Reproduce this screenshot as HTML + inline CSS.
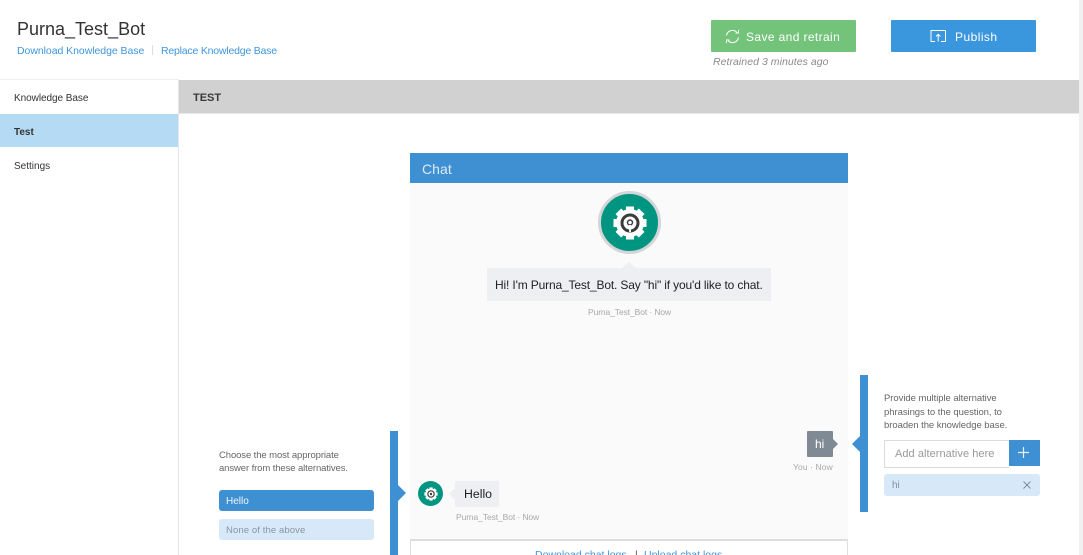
<!DOCTYPE html>
<html><head><meta charset="utf-8"><style>
html,body{margin:0;padding:0;background:#fff;width:1083px;height:555px;overflow:hidden}
body{position:relative;font-family:"Liberation Sans",sans-serif;color:#333}
#root{position:absolute;left:0;top:0;width:1083px;height:555px;overflow:hidden}
.a{position:absolute;white-space:nowrap}
svg{display:block}
</style></head><body><div id="root">

<div class="a" style="left:1079px;top:0;width:4px;height:555px;background:#f1f1f1"></div>
<div class="a" style="left:17px;top:18px;font-size:18px;line-height:22px;color:#333">Purna_Test_Bot</div>
<div class="a" style="left:17px;top:44px;font-size:10.5px;line-height:14px;color:#3f96dc;letter-spacing:-.05px">Download Knowledge Base</div>
<div class="a" style="left:152px;top:45px;width:1px;height:10px;background:#ddd"></div>
<div class="a" style="left:161px;top:44px;font-size:10.5px;line-height:14px;color:#3f96dc;letter-spacing:-.2px">Replace Knowledge Base</div>

<div class="a" style="left:711px;top:20px;width:145px;height:32px;background:#74c37b;border-radius:1px"></div>
<svg class="a" style="left:725px;top:29px" width="15" height="15" viewBox="0 0 15 15" fill="none" stroke="#fff" stroke-width="1"><path d="M1.5 6.5A6 6 0 0 1 12 3.5M13.5 1v3h-3M13.5 8.500A6 6 0 0 1 3 11.500M1.500 14v-3h3"/></svg>
<div class="a" style="left:746px;top:30px;font-size:12px;line-height:15px;color:#fff;letter-spacing:.38px">Save and retrain</div>
<div class="a" style="left:713px;top:55px;font-size:10.5px;line-height:14px;color:#8a8a8a;font-style:italic;letter-spacing:.05px">Retrained 3 minutes ago</div>
<div class="a" style="left:891px;top:20px;width:145px;height:32px;background:#3a96dd;border-radius:1px"></div>
<svg class="a" style="left:930px;top:29px" width="17" height="14" viewBox="0 0 17 14" fill="none" stroke="#fff" stroke-width="1"><path d="M5 12.500H1V1.500H15.500V12.500H11M8.200 12.500V5.500M6 7.500l2.200-2.200 2.200 2.200"/></svg>
<div class="a" style="left:955px;top:30px;font-size:12px;line-height:15px;color:#fff;letter-spacing:.45px">Publish</div>

<div class="a" style="left:0;top:79px;width:179px;height:1px;background:#eee"></div>
<div class="a" style="left:178px;top:80px;width:1px;height:475px;background:#e3e6e8"></div>
<div class="a" style="left:179px;top:80px;width:900px;height:33px;background:#d1d1d1"></div>
<div class="a" style="left:179px;top:113px;width:900px;height:1px;background:#e8e8e8"></div>
<div class="a" style="left:193px;top:91px;font-size:11px;line-height:15px;font-weight:bold;color:#3a3a3a">TEST</div>
<div class="a" style="left:14px;top:91px;font-size:10px;line-height:15px;letter-spacing:-.05px">Knowledge Base</div>
<div class="a" style="left:0;top:114px;width:178px;height:33px;background:#b4dbf3"></div>
<div class="a" style="left:14px;top:125px;font-size:10px;line-height:15px;font-weight:bold">Test</div>
<div class="a" style="left:14px;top:159px;font-size:10px;line-height:15px">Settings</div>

<div class="a" style="left:410px;top:183px;width:438px;height:372px;background:#fafafa"></div>
<div class="a" style="left:410px;top:153px;width:438px;height:30px;background:#3e90d2"></div>
<div class="a" style="left:422px;top:160px;font-size:14px;line-height:18px;color:#dcebf7;letter-spacing:.05px">Chat</div>

<div class="a" style="left:598px;top:191px;width:57px;height:57px;border:3px solid #d3d5d8;border-radius:50%;background:#009580"></div>
<svg class="a" style="left:609.5px;top:202.5px" width="40" height="40" viewBox="-20 -20 40 40"><circle r="14" fill="#fff"/><g fill="#fff"><rect x="-4" y="-16.5" width="8" height="33"/><rect x="-4" y="-16.5" width="8" height="33" transform="rotate(45)"/><rect x="-4" y="-16.5" width="8" height="33" transform="rotate(90)"/><rect x="-4" y="-16.5" width="8" height="33" transform="rotate(135)"/></g><circle r="8" fill="none" stroke="#3c3c3c" stroke-width="3"/><circle r="4.5" fill="#fff"/><circle cy="-.5" r="2.500" fill="none" stroke="#3c3c3c" stroke-width="1.500"/><path d="M0 2v7" stroke="#fff" stroke-width="1.800"/></svg>
<div class="a" style="left:487px;top:268px;width:284px;height:33px;background:#edeff2"></div>
<div class="a" style="left:622px;top:262px;width:0;height:0;border:7px solid transparent;border-top:0;border-bottom:6px solid #edeff2"></div>
<div class="a" style="left:495px;top:278px;font-size:12px;line-height:15px;color:#222;letter-spacing:-.15px">Hi! I'm Purna_Test_Bot. Say "hi" if you'd like to chat.</div>
<div class="a" style="left:588px;top:306px;font-size:8.5px;line-height:12px;color:#a8a8a8;letter-spacing:-.1px">Purna_Test_Bot · Now</div>

<div class="a" style="left:807px;top:431px;width:26px;height:26px;background:#808a94;border-radius:1px"></div>
<div class="a" style="left:833px;top:439px;width:0;height:0;border:5px solid transparent;border-right:0;border-left:5px solid #808a94"></div>
<div class="a" style="left:815px;top:436px;font-size:12px;line-height:16px;color:#fff">hi</div>
<div class="a" style="left:793px;top:461px;font-size:8.5px;line-height:12px;color:#a8a8a8;letter-spacing:.1px">You · Now</div>

<div class="a" style="left:860px;top:375px;width:8px;height:137px;background:#3e90d2"></div>
<div class="a" style="left:852px;top:436px;width:0;height:0;border:8px solid transparent;border-left:0;border-right:8px solid #3e90d2"></div>
<div class="a" style="left:884px;top:392px;font-size:9.5px;line-height:13.5px;color:#666;white-space:pre;letter-spacing:-.05px">Provide multiple alternative
phrasings to the question, to
broaden the knowledge base.</div>
<div class="a" style="left:884px;top:440px;width:124px;height:26px;border:1px solid #dcdcdc;border-width:1px 0 1px 1px;background:#fff"></div>
<div class="a" style="left:895px;top:447px;font-size:11px;line-height:15px;color:#999;letter-spacing:.05px">Add alternative here</div>
<div class="a" style="left:1009px;top:440px;width:31px;height:26px;background:#3e90d2"></div>
<svg class="a" style="left:1016px;top:445px" width="15" height="15" viewBox="0 0 15 15" stroke="#e4f0fa" stroke-width="1.2"><path d="M7.500 2v11M2 7.500h11"/></svg>
<div class="a" style="left:884px;top:474px;width:156px;height:22px;background:#d7e8f8;border-radius:3px"></div>
<div class="a" style="left:892px;top:479px;font-size:10px;line-height:14px;color:#85929e">hi</div>
<svg class="a" style="left:1022px;top:480px" width="10" height="10" viewBox="0 0 10 10" stroke="#7d8a96" stroke-width=".9"><path d="M1.500 1.500l7 7M8.500 1.500l-7 7"/></svg>

<div class="a" style="left:390px;top:431px;width:8px;height:124px;background:#3e90d2"></div>
<div class="a" style="left:398px;top:485px;width:0;height:0;border:8px solid transparent;border-right:0;border-left:8px solid #3e90d2"></div>
<div class="a" style="left:219px;top:448.5px;font-size:9.5px;line-height:13.5px;color:#666;white-space:pre;letter-spacing:-.1px">Choose the most appropriate
answer from these alternatives.</div>
<div class="a" style="left:219px;top:490px;width:155px;height:21px;background:#3e90d2;border-radius:3px"></div>
<div class="a" style="left:226px;top:495px;font-size:10px;line-height:13px;color:#eef6fc">Hello</div>
<div class="a" style="left:219px;top:519px;width:155px;height:21px;background:#d7e8f8;border-radius:3px"></div>
<div class="a" style="left:226px;top:524px;font-size:9.5px;line-height:13px;color:#8a96a2;letter-spacing:.1px">None of the above</div>

<div class="a" style="left:418px;top:481px;width:25px;height:25px;border-radius:50%;background:#009580"></div>
<svg class="a" style="left:422.5px;top:485.5px" width="16" height="16" viewBox="-20 -20 40 40"><circle r="14" fill="#fff"/><g fill="#fff"><rect x="-4" y="-16.5" width="8" height="33"/><rect x="-4" y="-16.5" width="8" height="33" transform="rotate(45)"/><rect x="-4" y="-16.5" width="8" height="33" transform="rotate(90)"/><rect x="-4" y="-16.5" width="8" height="33" transform="rotate(135)"/></g><circle r="8" fill="none" stroke="#3c3c3c" stroke-width="3"/><circle r="3" fill="#3c3c3c"/></svg>
<div class="a" style="left:455px;top:481px;width:44px;height:26px;background:#edeff2;border-radius:2px"></div>
<div class="a" style="left:449px;top:488px;width:0;height:0;border:6px solid transparent;border-left:0;border-right:6px solid #edeff2"></div>
<div class="a" style="left:464px;top:486px;font-size:12.3px;line-height:16px;color:#222">Hello</div>
<div class="a" style="left:456px;top:511px;font-size:8.5px;line-height:12px;color:#a8a8a8;letter-spacing:-.1px">Purna_Test_Bot · Now</div>

<div class="a" style="left:410px;top:539px;width:436px;height:16px;background:#fff;border:1px solid #dedede;border-bottom:0;border-top-width:2px"></div>
<div class="a" style="left:535px;top:548px;font-size:10.5px;line-height:14px;color:#3f96dc">Download chat logs</div>
<div class="a" style="left:635px;top:548px;font-size:10.5px;line-height:14px;color:#555">|</div>
<div class="a" style="left:644px;top:548px;font-size:10.5px;line-height:14px;color:#3f96dc">Upload chat logs</div>
</div></body></html>
